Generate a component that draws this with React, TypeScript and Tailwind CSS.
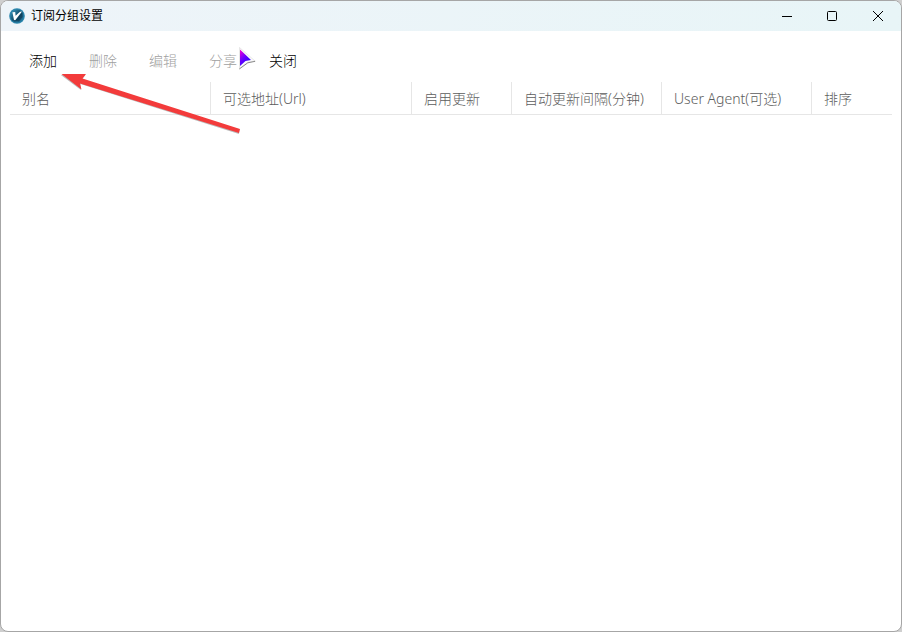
import React from "react";

type MenuItem = { label: string; enabled: boolean };
type Column = { label: string; width: string };

const menuItems: MenuItem[] = [
  { label: "添加", enabled: true },
  { label: "删除", enabled: false },
  { label: "编辑", enabled: false },
  { label: "分享", enabled: false },
  { label: "关闭", enabled: true },
];

const columns: Column[] = [
  { label: "别名", width: "w-[200px]" },
  { label: "可选地址(Url)", width: "w-[201px]" },
  { label: "启用更新", width: "w-[100px]" },
  { label: "自动更新间隔(分钟)", width: "w-[150px]" },
  { label: "User Agent(可选)", width: "w-[150px]" },
  { label: "排序", width: "w-auto" },
];

function AppLogo() {
  return (
    <svg className="size-4" viewBox="0 0 16 16" aria-hidden="true">
      <defs>
        <linearGradient id="disc" x1="0" y1="0" x2="1" y2="1">
          <stop offset="0" stopColor="#3f9cc0" />
          <stop offset="0.5" stopColor="#14506f" />
          <stop offset="1" stopColor="#2b88b0" />
        </linearGradient>
      </defs>
      <circle cx="8" cy="8" r="7.8" fill="#2a86ad" />
      <circle cx="8" cy="8" r="6.6" fill="url(#disc)" />
      <path d="M6 12.5 13 4.5 13.6 9 10 13.6Z" fill="#0b3048" opacity="0.6" />
      <path d="M3.4 4.2 6.2 4 6.6 7.8 11 3.8 13 3.6 6.4 12 5 12Z" fill="#fff" />
    </svg>
  );
}

function TitleBar() {
  return (
    <header className="flex h-[30px] shrink-0 items-center bg-linear-to-r from-[#eef4f9] to-[#e8f5f7] pl-2">
      <AppLogo />
      <h1 className="ml-1.5 text-xs leading-4 text-black">订阅分组设置</h1>
      <div className="ml-auto flex h-full pb-px">
        <button type="button" aria-label="最小化" className="grid w-[45px] place-items-center">
          <svg className="size-3" viewBox="0 0 12 12" fill="none" stroke="#000">
            <path d="M1 6.5h10" />
          </svg>
        </button>
        <button type="button" aria-label="最大化" className="grid w-[46px] place-items-center">
          <svg className="size-3" viewBox="0 0 12 12" fill="none" stroke="#000">
            <rect x="1.5" y="1.5" width="9" height="9" rx="1" />
          </svg>
        </button>
        <button type="button" aria-label="关闭窗口" className="grid w-[46px] place-items-center">
          <svg className="size-3" viewBox="0 0 12 12" fill="none" stroke="#000">
            <path d="M1 1 11 11M11 1 1 11" />
          </svg>
        </button>
      </div>
    </header>
  );
}

function Annotation() {
  return (
    <svg
      className="pointer-events-none absolute top-10 left-14 h-[100px] w-[210px]"
      viewBox="57 41 210 100"
      aria-hidden="true"
    >
      <defs>
        <linearGradient id="pointer" x1="0" y1="0" x2="0.7" y2="1">
          <stop offset="0" stopColor="#ff00d0" />
          <stop offset="0.5" stopColor="#6a00ff" />
          <stop offset="1" stopColor="#2000ff" />
        </linearGradient>
      </defs>
      <path
        d="M239.5 47.5 255 61 247.5 62.5 239.5 68.5Z"
        fill="#fafafa"
        stroke="#d8d8d8"
        strokeWidth="0.6"
      />
      <path d="M255.2 61.3 247.8 62.8 239.3 69" fill="none" stroke="#8a8a8a" />
      <path d="M240 49.5 251 60 245.5 61 240 66Z" fill="url(#pointer)" />
      <path
        d="M61.5 74.3 86 74.5 82.5 79 240 129 239.5 133.5 81 83.5 81.5 89.5Z"
        fill="#777"
        opacity="0.5"
        transform="translate(-0.6 0.6)"
      />
      <path d="M61.5 74 86 74 82.5 78.5 240 129 239 133 80 83.5 81.5 89.5Z" fill="#f33b3b" />
    </svg>
  );
}

export default function App() {
  return (
    <div className="h-screen bg-[#cfcfcf] font-['Noto_Sans','Noto_Sans_CJK_SC',sans-serif]">
      <div className="relative flex h-full flex-col overflow-hidden rounded-lg border border-[#a6a6a6] bg-white">
        <TitleBar />
        <nav className="mt-[14px] flex h-8 shrink-0 pl-3 text-sm">
          {menuItems.map((item) => (
            <button
              key={item.label}
              type="button"
              disabled={!item.enabled}
              className="px-4 font-light text-black disabled:text-[#a0a0a0]"
            >
              {item.label}
            </button>
          ))}
        </nav>
        <main className="mt-[5px] px-[9px]">
          <table className="w-full table-fixed border-separate border-spacing-0 text-sm text-[#5c5c5c]">
            <thead>
              <tr>
                {columns.map((column) => (
                  <th
                    key={column.label}
                    scope="col"
                    className={`${column.width} h-[33px] border-b border-l border-[#e6e6e6] p-0 pt-px pl-3 text-left align-middle font-light whitespace-nowrap first:border-l-0`}
                  >
                    {column.label}
                  </th>
                ))}
              </tr>
            </thead>
            <tbody />
          </table>
        </main>
        <Annotation />
      </div>
    </div>
  );
}
